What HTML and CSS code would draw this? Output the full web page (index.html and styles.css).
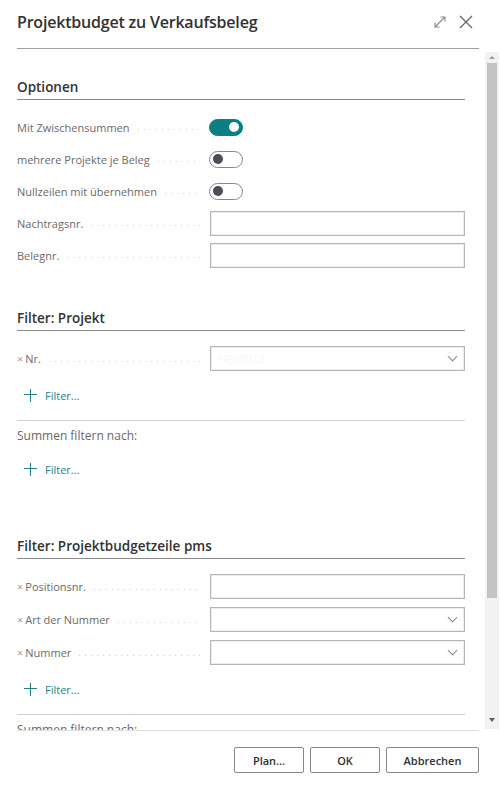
FILE: index.html
```html
<!DOCTYPE html>
<html>
<head>
  <meta charset="utf-8">
  <meta name="viewport" content="width=device-width">
  <title>Projektbudget zu Verkaufsbeleg</title>
  <link rel="stylesheet" href="styles.css">
</head>
<body>
  <div class="dialog">
    <div class="header">
      <h1 class="title">Projektbudget zu Verkaufsbeleg</h1>
      <div class="header-icons">
        <svg class="icon" width="14" height="14" viewBox="0 0 14 14">
          <path d="M2 12 L12 2 M7.5 2 H12 V6.5 M2 7.5 V12 H6.5" fill="none" stroke="#888" stroke-width="1.1"/>
        </svg>
        <svg class="icon" width="14" height="14" viewBox="0 0 14 14">
          <path d="M1 1 L13 13 M13 1 L1 13" fill="none" stroke="#666" stroke-width="1.3"/>
        </svg>
      </div>
    </div>

    <div class="body">
      <div class="content">
        <!-- Optionen -->
        <h2 class="group-head first">Optionen</h2>
        <div class="rows">
          <div class="row">
            <span class="label">Mit Zwischensummen</span><span class="leader"></span>
            <span class="toggle on"><span class="knob"></span></span>
          </div>
          <div class="row">
            <span class="label">mehrere Projekte je Beleg</span><span class="leader"></span>
            <span class="toggle"><span class="knob"></span></span>
          </div>
          <div class="row">
            <span class="label">Nullzeilen mit übernehmen</span><span class="leader"></span>
            <span class="toggle"><span class="knob"></span></span>
          </div>
          <div class="row">
            <span class="label">Nachtragsnr.</span><span class="leader"></span>
            <span class="input"></span>
          </div>
          <div class="row">
            <span class="label">Belegnr.</span><span class="leader"></span>
            <span class="input"></span>
          </div>
        </div>

        <!-- Filter: Projekt -->
        <h2 class="group-head">Filter: Projekt</h2>
        <div class="rows">
          <div class="row filter-row">
            <span class="label"><span class="x">×</span>Nr.</span><span class="leader"></span>
            <span class="input select"><span class="ghost">PRJ00012</span><span class="chevron"></span></span>
          </div>
        </div>
        <div class="add-filter"><span class="plus"></span>Filter...</div>
        <div class="divider"></div>
        <div class="sub-head">Summen filtern nach:</div>
        <div class="add-filter after-sub"><span class="plus"></span>Filter...</div>

        <!-- Filter: Projektbudgetzeile pms -->
        <h2 class="group-head wide">Filter: Projektbudgetzeile pms</h2>
        <div class="rows">
          <div class="row filter-row">
            <span class="label"><span class="x">×</span>Positionsnr.</span><span class="leader"></span>
            <span class="input"></span>
          </div>
          <div class="row filter-row">
            <span class="label"><span class="x">×</span>Art der Nummer</span><span class="leader"></span>
            <span class="input select"><span class="chevron"></span></span>
          </div>
          <div class="row filter-row">
            <span class="label"><span class="x">×</span>Nummer</span><span class="leader"></span>
            <span class="input select"><span class="chevron"></span></span>
          </div>
        </div>
        <div class="add-filter"><span class="plus"></span>Filter...</div>
        <div class="divider"></div>
        <div class="sub-head">Summen filtern nach:</div>
        <div class="add-filter after-sub"><span class="plus"></span>Filter...</div>
      </div>

      <div class="scrollbar">
        <span class="arrow up"></span>
        <span class="thumb"></span>
        <span class="track"></span>
        <span class="arrow down"></span>
      </div>
    </div>

    <div class="footer">
      <button class="btn plan">Plan...</button>
      <button class="btn ok">OK</button>
      <button class="btn cancel">Abbrechen</button>
    </div>
  </div>
</body>
</html>
```

FILE: styles.css
```css
* {
  box-sizing: border-box;
}
body {
  margin: 0;
  background: #fff;
  font-family: "Open Sans", "Noto Sans", sans-serif;
  color: #323130;
}

.dialog {
  width: 500px;
  height: 792px;
  display: flex;
  flex-direction: column;
  overflow: hidden;
}

/* kopf */
.header {
  height: 49px;
  margin: 0 21px 0 17px;
  border-bottom: 1px solid #a19f9d;
  display: flex;
  align-items: center;
  padding-bottom: 4px;
  flex: none;
}
.title {
  margin: 0;
  font-size: 16px;
  font-weight: 600;
  letter-spacing: -0.2px;
  flex: 1;
}
.header-icons {
  display: flex;
  gap: 12px;
  margin-right: 6px;
}
.icon {
  display: block;
}

/* scrollbereich */
.body {
  height: 681px;
  display: flex;
  flex: none;
}
.content {
  flex: 1;
  overflow: hidden;
  padding: 0 20px 0 17px;
}

.group-head {
  margin: 37px 0 0;
  font-size: 13.5px;
  font-weight: 600;
  line-height: 20px;
  padding-bottom: 2px;
  border-bottom: 1px solid #8a8886;
}
.group-head.first {
  margin-top: 28px;
}
.group-head.wide {
  margin-top: 53px;
}

.rows {
  margin-top: 11px;
}
.row {
  height: 32px;
  display: flex;
  align-items: center;
}
.row.filter-row {
  height: 33px;
}
.label {
  font-size: 11px;
  color: #6b6967;
  white-space: nowrap;
}
.label .x {
  color: #a19f9d;
  margin-right: 2px;
  font-size: 11px;
}
.leader {
  flex: 1;
  height: 1px;
  margin: 5px 10px 0 8px;
  background: linear-gradient(to right, #cfcdcb 1px, transparent 1px) repeat-x;
  background-size: 6px 1px;
}

.toggle {
  flex: none;
  width: 34px;
  height: 17px;
  border-radius: 9px;
  border: 1.5px solid #8a8886;
  margin-right: 222px;
  display: flex;
  align-items: center;
  padding: 0 3px;
}
.toggle .knob {
  width: 10px;
  height: 10px;
  border-radius: 50%;
  background: #4d4b5c;
}
.toggle.on {
  background: #0b7f83;
  border-color: #0b7f83;
  justify-content: flex-end;
}
.toggle.on .knob {
  background: #fff;
}

.input {
  flex: none;
  width: 255px;
  height: 25px;
  border: 1px solid #b8b6b4;
  box-shadow: inset 0 0 0 0.5px #dcdcdc;
  display: flex;
  align-items: center;
  padding: 0 8px 0 6px;
}
.input.select {
  justify-content: space-between;
}
.ghost {
  font-size: 11px;
  color: #f6f6f6;
}
.chevron {
  margin-left: auto;
  width: 7px;
  height: 7px;
  border-right: 1px solid #8a8886;
  border-bottom: 1px solid #8a8886;
  transform: translateY(-2px) rotate(45deg);
}

.add-filter {
  height: 28px;
  margin-top: 6px;
  display: flex;
  align-items: center;
  padding-left: 7px;
  font-size: 11px;
  color: #2b7f83;
}
.add-filter.after-sub {
  margin-top: 9px;
}
.plus {
  width: 13px;
  height: 13px;
  margin-right: 8px;
  background:
    linear-gradient(#1f7f82, #1f7f82) center / 13px 1.3px no-repeat,
    linear-gradient(#1f7f82, #1f7f82) center / 1.3px 13px no-repeat;
}

.divider {
  margin-top: 11px;
  height: 1px;
  background: #d2d0ce;
}
.sub-head {
  margin-top: 5px;
  font-size: 12px;
  line-height: 20px;
  color: #6b6967;
}

/* scrollleiste */
.scrollbar {
  flex: none;
  width: 14px;
  margin: 3px 1px 1px 0;
  background: #f3f2f1;
  display: flex;
  flex-direction: column;
  align-items: center;
}
.scrollbar .thumb {
  width: 10px;
  height: 535px;
  background: #c4c3c5;
}
.scrollbar .track {
  flex: 1;
}
.arrow {
  width: 0;
  height: 0;
  border-left: 3px solid transparent;
  border-right: 3px solid transparent;
  margin: 4px 0 4px;
}
.arrow.up {
  border-bottom: 3px solid #9a9a9a;
}
.arrow.down {
  border-top: 4px solid #605e5c;
  margin-bottom: 7px;
}

/* fuss */
.footer {
  flex: 1;
  margin: 0 21px 0 17px;
  border-top: 1px solid #e1dfdd;
  padding-top: 16px;
  display: flex;
  justify-content: flex-end;
  align-items: flex-start;
  gap: 6px;
}
.btn {
  height: 26px;
  border: 1px solid #8a8886;
  border-radius: 2px;
  background: #fff;
  font-family: inherit;
  font-size: 11px;
  font-weight: 600;
  color: #323130;
  padding: 0;
}
.btn.plan,
.btn.ok {
  width: 70px;
}
.btn.cancel {
  width: 93px;
}
```
